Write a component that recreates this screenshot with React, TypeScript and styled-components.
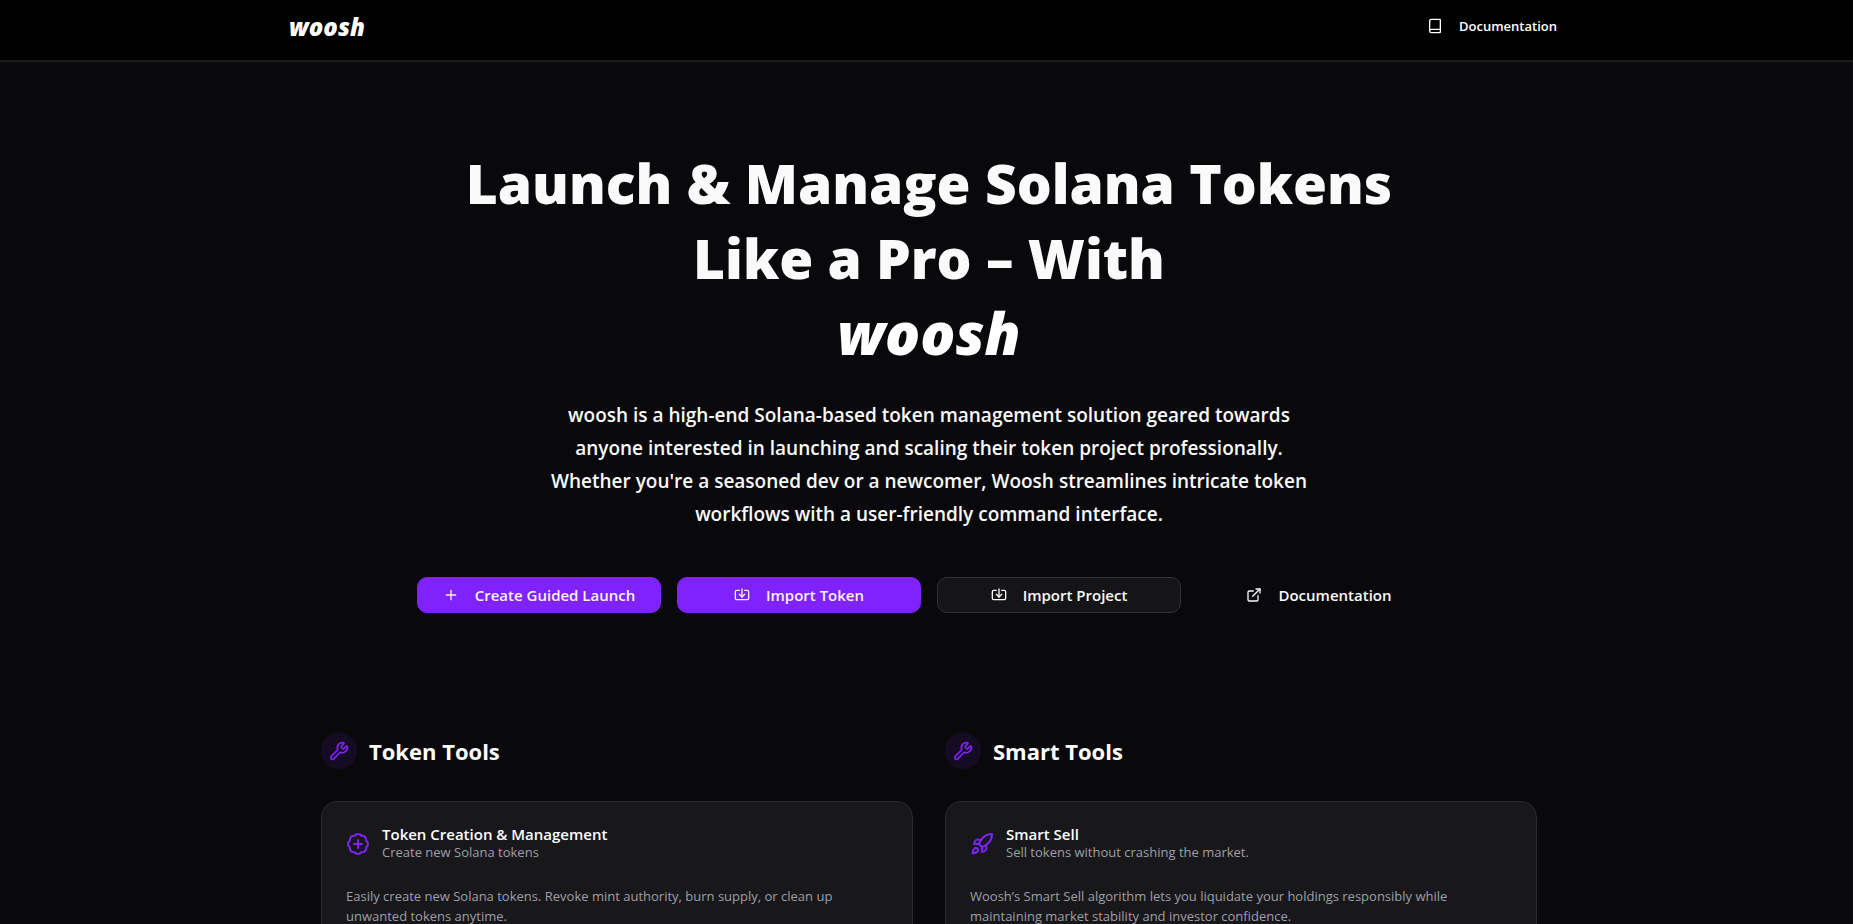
import React from 'react';
import styled, { createGlobalStyle } from 'styled-components';
import { BadgePlus, Book, Plus, Rocket, Wrench, ExternalLink } from 'lucide-react';

const GlobalStyle = createGlobalStyle`
  *, *::before, *::after { box-sizing: border-box; }
  html { scrollbar-width: none; }
  body {
    margin: 0;
    background: #09090b;
    color: #fafafa;
    font-family: 'Open Sans', 'Noto Sans', sans-serif;
  }
  h1, h2, h3, p { margin: 0; }
`;

const Page = styled.div`
  min-height: 100vh;
`;

const TopBar = styled.header`
  height: 62px;
  padding-left: 5px;
  background: #000;
  border-bottom: 2px solid #1b1b1b;
`;

const TopBarInner = styled.div`
  max-width: 1280px;
  height: 52px;
  margin: 0 auto;
  display: flex;
  align-items: center;
  justify-content: space-between;
`;

const Brand = styled.a`
  padding-top: 2px;
  color: #fff;
  font-size: 24px;
  line-height: 32px;
  font-weight: 800;
  font-style: italic;
  text-decoration: none;
`;

const NavLink = styled.a`
  display: flex;
  align-items: center;
  gap: 16px;
  padding: 0 12px;
  color: #fff;
  font-size: 13px;
  line-height: 20px;
  font-weight: 600;
  text-decoration: none;
`;

const Main = styled.main`
  padding: 83px 0 96px 5px;
`;

const Hero = styled.section`
  max-width: 1024px;
  margin: 0 auto;
  display: flex;
  flex-direction: column;
  align-items: center;
  text-align: center;
`;

const Headline = styled.h1`
  max-width: 960px;
  font-size: 55px;
  line-height: 75px;
  font-weight: 800;
`;

const HeadlineBrand = styled.span`
  display: block;
  color: #fff;
  font-size: 58px;
  font-style: italic;
`;

const Lead = styled.p`
  max-width: 768px;
  margin-top: 29px;
  font-size: 19px;
  line-height: 33px;
  font-weight: 600;
`;

const Actions = styled.div`
  width: 100%;
  margin-top: 46px;
  display: grid;
  grid-template-columns: repeat(4, 1fr);
  gap: 16px;
`;

const Action = styled.button<{ $tone?: 'solid' | 'outline' }>`
  height: 36px;
  display: flex;
  align-items: center;
  justify-content: center;
  gap: 16px;
  border: 1px solid ${p => (p.$tone === 'solid' ? '#7f22fe' : p.$tone === 'outline' ? '#323234' : 'transparent')};
  border-radius: 10px;
  background: ${p => (p.$tone === 'solid' ? '#7f22fe' : p.$tone === 'outline' ? '#151517' : 'transparent')};
  color: ${p => (p.$tone === 'solid' ? '#f5f3ff' : '#fafafa')};
  font-family: inherit;
  font-size: 15px;
  line-height: 24px;
  font-weight: 600;
  text-decoration: none;
`;

const Tools = styled.div`
  max-width: 1216px;
  margin: 120px auto 0;
  display: grid;
  grid-template-columns: repeat(2, 1fr);
  gap: 32px;
`;

const ToolGroup = styled.section`
  display: flex;
  flex-direction: column;
  gap: 32px;
`;

const GroupHeader = styled.div`
  display: flex;
  align-items: center;
  gap: 12px;
`;

const GroupBadge = styled.span`
  width: 36px;
  height: 36px;
  display: flex;
  align-items: center;
  justify-content: center;
  border-radius: 50%;
  background: #150b23;
  color: #7f22fe;
`;

const GroupTitle = styled.h2`
  color: #fff;
  font-size: 22px;
  line-height: 32px;
  font-weight: 700;
`;

const Card = styled.article`
  padding: 24px;
  border: 1px solid #2b2b2e;
  border-radius: 16px;
  background: #18181b;
`;

const CardHeader = styled.div`
  display: flex;
  align-items: center;
  gap: 12px;
  color: #7f22fe;
`;

const CardTitle = styled.h3`
  color: #fff;
  font-size: 15px;
  line-height: 16px;
  font-weight: 600;
`;

const CardSubtitle = styled.p`
  color: #9f9fa9;
  font-size: 13px;
  line-height: 20px;
`;

const CardText = styled.p`
  margin-top: 24px;
  color: #9f9fa9;
  font-size: 13px;
  line-height: 20px;
`;

const ImportIcon = () => (
  <svg width="16" height="16" viewBox="0 0 24 24" fill="none" stroke="currentColor" strokeWidth="2" strokeLinecap="round" strokeLinejoin="round" aria-hidden="true">
    <path d="M12 3v12" />
    <path d="m8 11 4 4 4-4" />
    <path d="M8 5H4a2 2 0 0 0-2 2v10a2 2 0 0 0 2 2h16a2 2 0 0 0 2-2V7a2 2 0 0 0-2-2h-4" />
  </svg>
);

const groups = [
  {
    title: 'Token Tools',
    icon: <BadgePlus size={24} />,
    name: 'Token Creation & Management',
    summary: 'Create new Solana tokens',
    text: 'Easily create new Solana tokens. Revoke mint authority, burn supply, or clean up unwanted tokens anytime.',
  },
  {
    title: 'Smart Tools',
    icon: <Rocket size={24} />,
    name: 'Smart Sell',
    summary: 'Sell tokens without crashing the market.',
    text: 'Woosh’s Smart Sell algorithm lets you liquidate your holdings responsibly while maintaining market stability and investor confidence.',
  },
];

export default function App() {
  return (
    <Page>
      <GlobalStyle />
      <TopBar>
        <TopBarInner>
          <Brand href="#">woosh</Brand>
          <NavLink href="#docs"><Book size={16} />Documentation</NavLink>
        </TopBarInner>
      </TopBar>
      <Main>
        <Hero>
          <Headline>
            Launch &amp; Manage Solana Tokens Like a Pro – With
            <HeadlineBrand>woosh</HeadlineBrand>
          </Headline>
          <Lead>
            woosh is a high-end Solana-based token management solution geared towards anyone
            interested in launching and scaling their token project professionally. Whether you're a
            seasoned dev or a newcomer, Woosh streamlines intricate token workflows with a
            user-friendly command interface.
          </Lead>
          <Actions>
            <Action $tone="solid"><Plus size={16} />Create Guided Launch</Action>
            <Action $tone="solid"><ImportIcon />Import Token</Action>
            <Action $tone="outline"><ImportIcon />Import Project</Action>
            <Action as="a" href="#docs"><ExternalLink size={16} />Documentation</Action>
          </Actions>
        </Hero>
        <Tools>
          {groups.map(g => (
            <ToolGroup key={g.title}>
              <GroupHeader>
                <GroupBadge><Wrench size={20} /></GroupBadge>
                <GroupTitle>{g.title}</GroupTitle>
              </GroupHeader>
              <Card>
                <CardHeader>
                  {g.icon}
                  <div>
                    <CardTitle>{g.name}</CardTitle>
                    <CardSubtitle>{g.summary}</CardSubtitle>
                  </div>
                </CardHeader>
                <CardText>{g.text}</CardText>
              </Card>
            </ToolGroup>
          ))}
        </Tools>
      </Main>
    </Page>
  );
}
